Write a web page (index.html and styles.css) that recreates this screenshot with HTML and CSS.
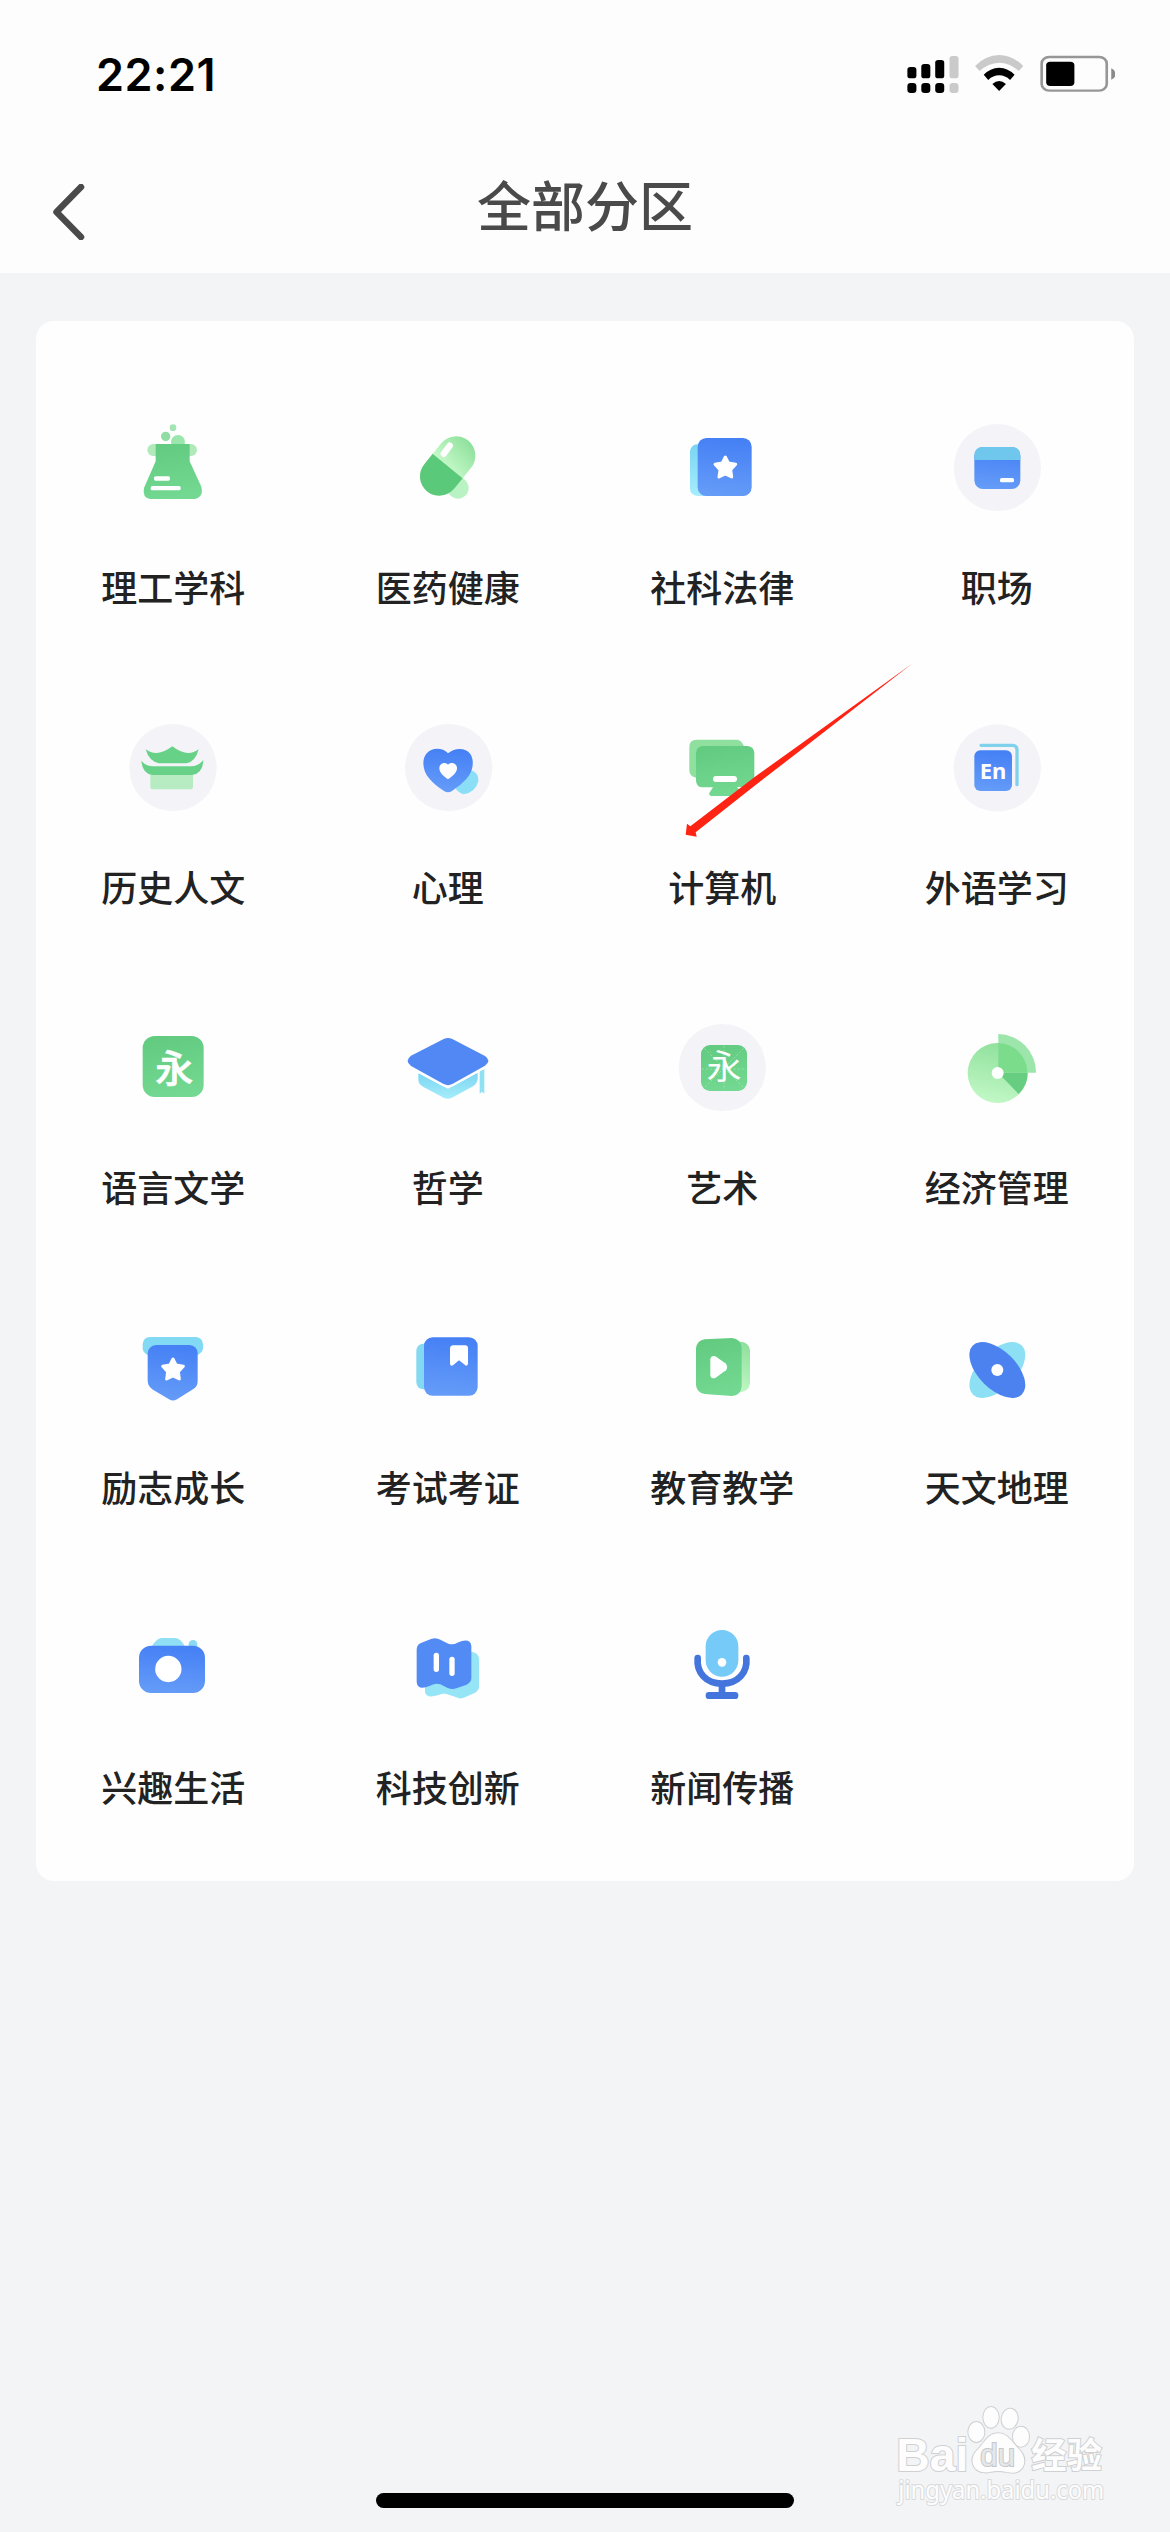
FILE: index.html
```html
<!DOCTYPE html>
<html lang="zh-CN">
<head>
<meta charset="utf-8">
<title>全部分区</title>
<link rel="stylesheet" href="styles.css">
</head>
<body>
<svg class="defs" width="0" height="0" aria-hidden="true">
  <defs>
    <linearGradient id="green" x1="0.2" y1="0" x2="0.4" y2="1"><stop offset="0" stop-color="#62cb80"/><stop offset="1" stop-color="#73d891"/></linearGradient>
    <linearGradient id="mint" x1="0.6" y1="0" x2="0.4" y2="1"><stop offset="0" stop-color="#8fe09c"/><stop offset="1" stop-color="#c2f8c6"/></linearGradient>
    <linearGradient id="blue" x1="0.5" y1="0" x2="0.4" y2="1"><stop offset="0" stop-color="#4580f5"/><stop offset="1" stop-color="#659cf8"/></linearGradient>
    <linearGradient id="cyan" x1="0.5" y1="0" x2="0.5" y2="1"><stop offset="0" stop-color="#7ad5f2"/><stop offset="1" stop-color="#a6edfb"/></linearGradient>
    <path id="star" stroke-linejoin="round" stroke-width="9" d="M0-31 9-13 31-9 16 7 19 29 0 20-19 29-16 7-31-9-9-13Z"/>
  </defs>
</svg>

<header class="header">
  <div class="status">
    <span class="time">22:21</span>
    <svg class="indicators" viewBox="868 165 554 115" preserveAspectRatio="none">
      <g fill="#000">
        <rect x="869" y="201" width="24" height="34" rx="8"/><rect x="906" y="192" width="24" height="43" rx="8"/><rect x="943" y="180" width="24" height="55" rx="8"/>
        <rect x="869" y="249" width="24" height="30" rx="9"/><rect x="906" y="249" width="24" height="30" rx="9"/><rect x="943" y="249" width="24" height="30" rx="9"/>
      </g>
      <g fill="#cacaca"><rect x="981" y="168" width="24" height="67" rx="8"/><rect x="981" y="249" width="24" height="30" rx="9"/></g>
      <path d="M1049 198Q1077 166 1113 165 1149 166 1177 198L1165 213Q1142 189 1113 188 1084 189 1061 213Z" fill="#cacaca"/>
      <path d="M1072 224Q1089 204 1113 203 1137 204 1154 224L1142 240Q1129 226 1113 226 1097 226 1084 240Z"/>
      <path d="M1095 252Q1113 234 1131 252L1113 273Z"/>
      <rect x="1226" y="171" width="173" height="101" rx="20" fill="none" stroke="#979797" stroke-width="7"/>
      <rect x="1238" y="185" width="75" height="73" rx="11"/>
      <path d="M1411 205Q1422 210 1422 222 1422 234 1411 239Z" fill="#8a8a8a"/>
    </svg>
  </div>
  <div class="titlebar">
    <svg class="back" viewBox="0 0 32 56"><path d="M28 3 3.5 28 28 53"/></svg>
    <h1 class="title">全部分区</h1>
  </div>
</header>

<main class="card">
  <ul class="grid">
    <li class="cell">
      <svg class="icon" viewBox="130 51 300 300">
        <circle cx="280" cy="83" r="10" fill="#a3e4b3"/><circle cx="258" cy="109" r="14" fill="#8fdda3"/><circle cx="295" cy="126" r="21" fill="#9be6ad"/>
        <rect x="203" y="132" width="149" height="36" rx="18" fill="#b0eabb"/>
        <path d="M228 132H330V184L364 258Q374 290 346 297H212Q187 294 193 264L228 184Z" fill="url(#green)"/>
        <rect x="223" y="229" width="48" height="13" rx="5" fill="#fff"/><rect x="213" y="258" width="90" height="13" rx="5" fill="#fff"/>
      </svg>
      <span class="label">理工学科</span>
    </li>
    <li class="cell">
      <svg class="icon" viewBox="953 51 300 300">
        <circle cx="1133" cy="264" r="32" fill="#b9f3c3"/>
        <g transform="rotate(39 1102 198)">
          <path d="M1044 198V158A58 58 0 0 1 1160 158V198Z" fill="url(#mint)"/>
          <path d="M1044 198H1160V238A58 58 0 0 1 1044 238Z" fill="#5bc97a"/>
        </g>
        <rect x="1090" y="125" width="19" height="49" rx="9" fill="#fff" transform="rotate(36 1099.500 149)"/>
      </svg>
      <span class="label">医药健康</span>
    </li>
    <li class="cell">
      <svg class="icon" viewBox="96 51 300 300">
        <rect x="150" y="133" width="90" height="155" rx="22" fill="url(#cyan)"/>
        <rect x="173" y="114" width="162" height="174" rx="26" fill="url(#blue)"/>
        <use href="#star" x="256" y="202" fill="#fff" stroke="#fff"/>
      </svg>
      <span class="label">社科法律</span>
    </li>
    <li class="cell">
      <svg class="icon" viewBox="920 51 300 300">
        <circle cx="1071" cy="203" r="131" fill="#f4f4f8"/>
        <rect x="1002" y="141" width="138" height="126" rx="26" fill="url(#blue)"/>
        <path d="M1002 180V167Q1002 141 1028 141H1114Q1140 141 1140 167V180Z" fill="#6fc7ee"/>
        <rect x="1079" y="234" width="42" height="13" rx="5" fill="#fff"/>
      </svg>
      <span class="label">职场</span>
    </li>

    <li class="cell">
      <svg class="icon" viewBox="130 51 300 300">
        <circle cx="280" cy="203" r="131" fill="#f4f4f8"/>
        <path d="M212 218H340V260Q340 268 332 268H220Q212 268 212 260Z" fill="#b7ebc2"/>
        <path d="M198 148Q232 174 278 139 323 174 357 148 348 184 321 190H238Q208 184 198 148Z" fill="#68d188"/>
        <path d="M185 182Q199 199 220 199H336Q357 198 371 180 370 221 337 225H219Q188 222 185 182Z" fill="#68d188"/>
      </svg>
      <span class="label">历史人文</span>
    </li>
    <li class="cell">
      <svg class="icon" viewBox="953 51 300 300">
        <circle cx="1105" cy="203" r="131" fill="#f4f4f8"/>
        <path d="M1170 210Q1198 219 1194 244 1186 277 1150 283 1132 276 1126 266Z" fill="#8adff6"/>
        <path d="M1103 160C1124 142 1156 142 1170 162 1184 184 1177 216 1158 237Q1140 257 1115 273 1103 281 1091 273 1064 256 1048 237C1027 214 1023 180 1038 161 1054 142 1086 142 1103 160Z" fill="url(#blue)"/>
        <path d="M1103 194C1114 184 1130 191 1130 205 1130 219 1115 230 1103 238 1091 230 1077 219 1077 205 1077 191 1092 184 1103 194Z" fill="#fff"/>
      </svg>
      <span class="label">心理</span>
    </li>
    <li class="cell">
      <svg class="icon" viewBox="96 201 300 300">
        <path d="M148 291Q148 269 170 269H291Q304 270 312 289L200 383H168Q148 380 148 361Z" fill="#8fdf9f"/>
        <path d="M168 308Q170 290 187 288H323Q341 290 343 308V392Q342 410 326 411H291L308 430Q307 438 299 438H213Q206 437 208 429L219 412H185Q169 409 168 392Z" fill="url(#green)"/>
        <rect x="219" y="378" width="72" height="18" rx="9" fill="#fff"/>
      </svg>
      <span class="label">计算机</span>
    </li>
    <li class="cell">
      <svg class="icon" viewBox="920 201 300 300">
        <circle cx="1071" cy="354" r="131" fill="#f4f4f8"/>
        <path d="M1022 286H1117Q1130 287 1130 300V404" fill="none" stroke="#80d2ec" stroke-width="10" stroke-linecap="round"/>
        <rect x="1002" y="301" width="113" height="122" rx="18" fill="url(#blue)"/>
        <text class="en" x="1018" y="387" textLength="80" lengthAdjust="spacing">En</text>
      </svg>
      <span class="label">外语学习</span>
    </li>

    <li class="cell">
      <svg class="icon" viewBox="130 51 300 300">
        <rect x="189" y="108" width="183" height="183" rx="36" fill="url(#green)"/>
        <text class="yong yong-bold" x="284" y="245">永</text>
      </svg>
      <span class="label">语言文学</span>
    </li>
    <li class="cell">
      <svg class="icon" viewBox="953 51 300 300">
        <path d="M1014 220 1103 266 1192 218V238Q1190 252 1178 259L1115 293Q1103 299 1090 293L1028 260Q1014 252 1014 239Z" fill="url(#cyan)"/>
        <path d="M1198 214 1212 207V281L1205 275 1198 281Z" fill="#91e1f4"/>
        <path d="M1090 117Q1103 111 1116 117L1214 168Q1234 182 1214 197L1116 252Q1103 259 1090 252L992 198Q972 182 992 167Z" fill="#5288f4" stroke="#fefefe" stroke-width="14" paint-order="stroke"/>
      </svg>
      <span class="label">哲学</span>
    </li>
    <li class="cell">
      <svg class="icon" viewBox="96 51 300 300">
        <circle cx="247" cy="203" r="131" fill="#f4f4f8"/>
        <rect x="183" y="135" width="138" height="138" rx="27" fill="url(#green)"/>
        <path d="M252 137V271M185 207H319M194 146 310 262M310 146 194 262" stroke="#a9e9b8" stroke-width="2" stroke-dasharray="6 6"/>
        <text class="yong yong-thin" x="252" y="237">永</text>
      </svg>
      <span class="label">艺术</span>
    </li>
    <li class="cell">
      <svg class="icon" viewBox="920 51 300 300">
        <circle cx="1072" cy="219" r="90" fill="url(#mint)"/>
        <path d="M1074 102A115 115 0 0 1 1187 218H1074Z" fill="#9ce5ab"/>
        <path d="M1074 129A89 89 0 0 1 1161 218H1074Z" fill="#7bdc8c"/>
        <path d="M1074 219H1162Q1162 256 1135 282Z" fill="#66cd81"/>
        <circle cx="1072" cy="219" r="18" fill="#fff"/>
      </svg>
      <span class="label">经济管理</span>
    </li>

    <li class="cell">
      <svg class="icon" viewBox="130 51 300 300">
        <path d="M209 111H349Q369 113 370 133V145Q369 157 354 165H204Q189 157 189 145V133Q190 113 209 111Z" fill="#82d9f3"/>
        <path d="M230 135H329Q353 137 354 160V243Q354 260 340 268L292 298Q280 305 268 298L220 269Q205 260 204 243V160Q206 137 230 135Z" fill="url(#blue)"/>
        <use href="#star" x="280" y="208" fill="#fff" stroke="#fff"/>
      </svg>
      <span class="label">励志成长</span>
    </li>
    <li class="cell">
      <svg class="icon" viewBox="953 51 300 300">
        <rect x="1008" y="131" width="80" height="137" rx="21" fill="#82d9f1"/>
        <rect x="1031" y="112" width="161" height="175" rx="26" fill="url(#blue)"/>
        <path d="M1117 136H1156Q1163 137 1163 144V191Q1161 200 1155 196L1136 181 1118 196Q1110 200 1109 191V144Q1110 137 1117 136Z" fill="#fff"/>
      </svg>
      <span class="label">考试考证</span>
    </li>
    <li class="cell">
      <svg class="icon" viewBox="96 51 300 300">
        <path d="M270 125H305Q327 128 330 151V250Q327 272 305 276H270Z" fill="url(#mint)"/>
        <path d="M194 118 276 114Q303 117 305 143V260Q302 286 276 288L194 282Q170 278 168 255V145Q171 121 194 118Z" fill="url(#green)"/>
        <path d="M211 177Q214 165 226 169L256 190Q266 200 258 211L227 233Q213 239 211 226Z" fill="#fff"/>
      </svg>
      <span class="label">教育教学</span>
    </li>
    <li class="cell">
      <svg class="icon" viewBox="920 51 300 300">
        <ellipse cx="1071" cy="210" rx="104" ry="57" fill="#8de0f4" transform="rotate(-45 1071 210)"/>
        <ellipse cx="1071" cy="210" rx="104" ry="57" fill="#4b82f0" transform="rotate(45 1071 210)"/>
        <circle cx="1071" cy="210" r="18" fill="#fff"/>
      </svg>
      <span class="label">天文地理</span>
    </li>

    <li class="cell">
      <svg class="icon" viewBox="130 51 300 300">
        <path d="M216 140Q231 114 246 114H286Q303 114 316 140Z" fill="#91dff4"/>
        <rect x="327" y="120" width="26" height="45" rx="13" fill="#8bd9f3"/>
        <rect x="178" y="137" width="198" height="142" rx="36" fill="url(#blue)"/>
        <circle cx="266" cy="207" r="39.500" fill="#fff"/>
      </svg>
      <span class="label">兴趣生活</span>
    </li>
    <li class="cell">
      <svg class="icon" viewBox="953 51 300 300">
        <path d="M1150 155H1175Q1195 160 1196 176V262Q1195 272 1184 278L1154 292Q1141 299 1126 291L1096 281Q1087 280 1072 286 1038 296 1034 277V210Z" fill="#95e5f7"/>
        <path d="M1020 130 1052 117Q1067 111 1080 119L1104 131Q1118 136 1131 128 1169 112 1173 137V235Q1173 247 1159 254L1128 265Q1116 269 1102 264L1080 253Q1066 248 1049 257 1012 274 1009 246V148Q1010 135 1020 130Z" fill="#538bf4"/>
        <rect x="1060" y="158" width="16" height="58" rx="8" fill="#fff"/><rect x="1107" y="170" width="16" height="58" rx="8" fill="#fff"/>
      </svg>
      <span class="label">科技创新</span>
    </li>
    <li class="cell">
      <svg class="icon" viewBox="1775 51 300 300">
        <rect x="1876" y="90" width="98" height="140" rx="49" fill="#75caf8"/>
        <circle cx="1925" cy="187" r="13" fill="#fff"/>
        <path d="M1852 174C1848 218 1877 251 1925 251S2002 218 1998 174" fill="none" stroke="#4475dc" stroke-width="20" stroke-linecap="round"/>
        <path d="M1925 250V285" stroke="#4475dc" stroke-width="20"/>
        <rect x="1876" y="276" width="98" height="21" rx="10" fill="#4475dc"/>
      </svg>
      <span class="label">新闻传播</span>
    </li>
  </ul>
  <svg class="arrow" viewBox="130 40 700 530">
    <path d="M138 555 142 522 152 530 345 382 480 285 817 42 480 304 345 408 168 548 171 561Z" fill="#ff2314"/>
  </svg>
</main>

<div class="home-indicator"></div>

<svg class="watermark" viewBox="400 100 650 320">
  <g class="wm-shape">
    <text class="wm-bai" x="410" y="303" textLength="216" lengthAdjust="spacingAndGlyphs">Bai</text>
    <ellipse cx="650" cy="187" rx="24" ry="30"/>
    <ellipse cx="694" cy="143" rx="23" ry="31"/>
    <ellipse cx="750" cy="147" rx="24" ry="30" transform="rotate(8 750 147)"/>
    <ellipse cx="784" cy="201" rx="24" ry="30"/>
    <path d="M715 191C745 191 755 216 778 239 806 267 795 309 757 309 740 309 735 304 715 304S690 309 675 308C638 306 627 268 652 242 677 217 684 191 715 191Z"/>
    <text class="wm-du" x="662" y="290" textLength="104" lengthAdjust="spacingAndGlyphs">du</text>
    <text class="wm-cn" x="815" y="295" textLength="212" lengthAdjust="spacingAndGlyphs">经验</text>
    <text class="wm-url" x="416" y="387" textLength="618" lengthAdjust="spacingAndGlyphs">jingyan.baidu.com</text>
  </g>
</svg>
</body>
</html>
```
FILE: styles.css
```css
* {
  box-sizing: border-box;
}

body {
  position: relative;
  display: flex;
  flex-direction: column;
  align-items: stretch;
  margin: 0;
  width: 1170px;
  height: 2532px;
  background: #f3f4f6;
  font-family: "Noto Sans CJK SC", sans-serif;
  overflow: hidden;
}

.defs {
  position: absolute;
}

.header {
  display: flex;
  flex-direction: column;
  height: 273px;
  background: #fdfdfd;
}

.status {
  display: flex;
  justify-content: space-between;
  align-items: flex-start;
  height: 142px;
  padding: 55px 55px 0 96px;
}

.time {
  font: 600 45px/39px Inter, sans-serif;
  letter-spacing: 0.5px;
  color: #000;
}

.indicators {
  width: 208.400px;
  height: 38.300px;
}

.titlebar {
  display: grid;
  grid-template-columns: 100px 1fr 100px;
  height: 131px;
}

.back {
  width: 32px;
  height: 56px;
  margin: 42px 0 0 53px;
}

.back path {
  fill: none;
  stroke: #4a4a4a;
  stroke-width: 6.500;
  stroke-linecap: round;
  stroke-linejoin: round;
}

.title {
  margin: 23px 0 0;
  font-size: 54px;
  line-height: 78px;
  font-weight: 500;
  text-align: center;
  color: #4a4a4a;
}

.card {
  position: relative;
  margin: 48px 36px 0;
  height: 1560px;
  padding: 30px 0;
  border-radius: 18px;
  background: #fefefe;
}

.grid {
  display: grid;
  grid-template-columns: repeat(4, 1fr);
  grid-auto-rows: 300px;
  margin: 0;
  padding: 0;
  list-style: none;
}

.cell {
  display: flex;
  flex-direction: column;
  align-items: center;
  gap: 43px;
  padding-top: 66px;
}

.icon {
  width: 100px;
  height: 100px;
}

.label {
  font-size: 36px;
  line-height: 52px;
  font-weight: 500;
  color: #222;
}

.en {
  font: 700 66px "Noto Sans", sans-serif;
  fill: #fff;
}

.yong {
  fill: #fff;
  text-anchor: middle;
}

.yong-bold {
  font-size: 114px;
  font-weight: 500;
  stroke: #fff;
  stroke-width: 2;
}

.yong-thin {
  font-size: 104px;
  font-weight: 400;
}

.arrow {
  position: absolute;
  left: 647.300px;
  top: 342.300px;
  width: 233.300px;
  height: 176.700px;
}

.home-indicator {
  width: 418px;
  height: 15px;
  margin: 612px auto 0;
  border-radius: 8px;
  background: #000;
}

.watermark {
  position: absolute;
  left: 893.300px;
  top: 2403.300px;
  width: 216.700px;
  height: 106.700px;
  overflow: visible;
}

.wm-shape {
  fill: #fdfdfd;
  stroke: #cfd0d2;
  stroke-width: 6;
  paint-order: stroke;
}

.wm-bai {
  font: 700 140px "Liberation Sans", sans-serif;
}

.wm-du {
  font: 400 92px "Liberation Sans", sans-serif;
  fill: #e6e7e9;
  stroke: #c6c7c9;
}

.wm-cn {
  font-size: 106px;
  font-weight: 700;
}

.wm-url {
  font: 400 74px "Noto Sans", sans-serif;
  stroke: #d9dadc;
}
```
